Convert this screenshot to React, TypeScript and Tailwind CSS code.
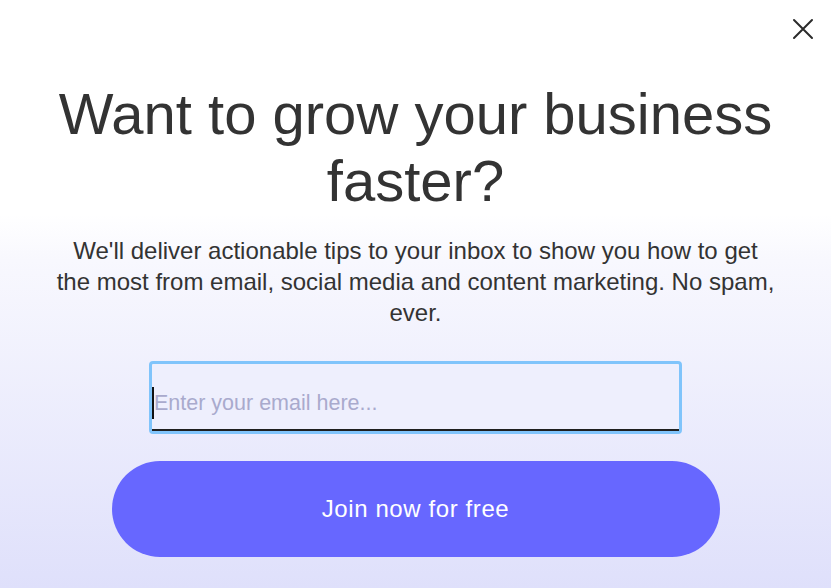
import { useState } from "react";

export default function App() {
  const [email, setEmail] = useState("");

  return (
    <div className="relative flex h-[588px] w-full flex-col items-center overflow-hidden bg-[linear-gradient(to_bottom,#ffffff_0px,#ffffff_214px,#f8f8fe_260px,#dfe0fb_100%)] font-['Liberation_Sans',Arial,sans-serif] text-[#333]">
      <button
        aria-label="Close"
        className="absolute right-[16px] top-[17px] flex h-[24px] w-[24px] items-center justify-center"
      >
        <svg width="22" height="22" viewBox="0 0 22 22" fill="none">
          <path d="M2 2L20 20M20 2L2 20" stroke="#2b2b2b" strokeWidth="2" strokeLinecap="round" />
        </svg>
      </button>

      <h1 className="pt-[80px] text-center text-[58px] leading-[67px] font-normal whitespace-nowrap">
        Want to grow your business
        <br />
        faster?
      </h1>

      <p className="mt-[21px] text-center text-[24px] leading-[31px] whitespace-nowrap">
        We'll deliver actionable tips to your inbox to show you how to get
        <br />
        the most from email, social media and content marketing. No spam,
        <br />
        ever.
      </p>

      <div className="mt-[33px] flex h-[73px] w-[533px] rounded-[4px] border-[3px] border-[#80c4fb] bg-[#eeeffd]">
        <div className="flex flex-1 items-center border-b-2 border-[#1f1f1f] pt-[13px]">
          <div className="h-[32px] w-[2px] bg-[#111]" />
          <input
            type="email"
            value={email}
            onChange={(e) => setEmail(e.target.value)}
            placeholder="Enter your email here..."
            className="h-[32px] flex-1 bg-transparent text-[21.5px] text-[#333] outline-none placeholder:text-[#a9aacd]"
          />
        </div>
      </div>

      <button className="mt-[27px] h-[96px] w-[608px] rounded-full bg-[#6767ff] text-[24px] tracking-[0.6px] text-white">
        Join now for free
      </button>
    </div>
  );
}
